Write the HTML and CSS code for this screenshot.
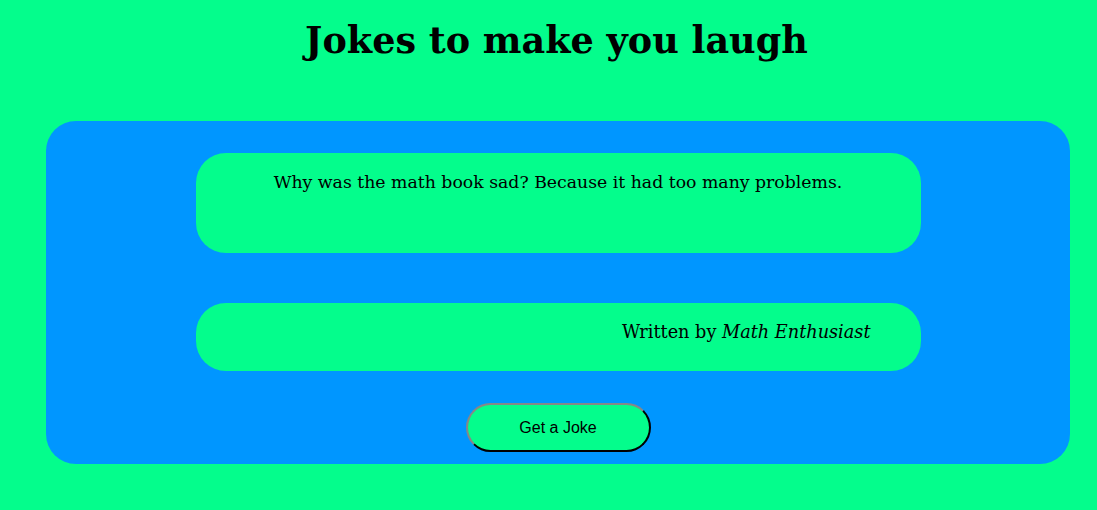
FILE: index.html
```html
<!DOCTYPE html>
<html>
<head>
<meta charset="utf-8">
<link rel="stylesheet" href="styles.css">
</head>
<body>
<h1 class="title">Jokes to make you laugh</h1>
<div class="board">
  <div class="joke">Why was the math book sad? Because it had too many problems.</div>
  <div class="author">Written by <em>Math Enthusiast</em></div>
  <button class="btn">Get a Joke</button>
</div>
</body>
</html>
```
FILE: styles.css
```css
html { background: #04fd8c; }
body {
  margin: 0 0 0 8px;
  width: 1097px;
  background: #04fd8c;
  font-family: "DejaVu Serif", Georgia, serif;
  color: #000;
}
.title {
  margin: 0;
  padding-top: 19px;
  height: 121px;
  box-sizing: border-box;
  text-align: center;
  font-size: 36.6px;
  font-weight: bold;
  line-height: 44px;
}
.board {
  margin: 0 35px 0 38px;
  height: 343px;
  box-sizing: border-box;
  background: #0096ff;
  border-radius: 30px;
  padding-top: 32px;
  display: flex;
  flex-direction: column;
  align-items: center;
}
.joke {
  width: 725px;
  height: 100px;
  box-sizing: border-box;
  background: #04fd8c;
  border-radius: 30px;
  padding-top: 18px;
  text-align: center;
  font-size: 17.3px;
  line-height: 22px;
}
.author {
  margin-top: 50px;
  width: 725px;
  height: 68px;
  box-sizing: border-box;
  background: #04fd8c;
  border-radius: 30px;
  padding: 18px 50px 0 0;
  text-align: right;
  font-size: 17.7px;
  line-height: 22px;
}
.btn {
  margin-top: 32px;
  width: 185px;
  height: 49px;
  background: #04fd8c;
  border: 2px outset #333;
  border-radius: 25px;
  font-family: "Liberation Sans", Arial, sans-serif;
  font-size: 16px;
  color: #000;
}
```
